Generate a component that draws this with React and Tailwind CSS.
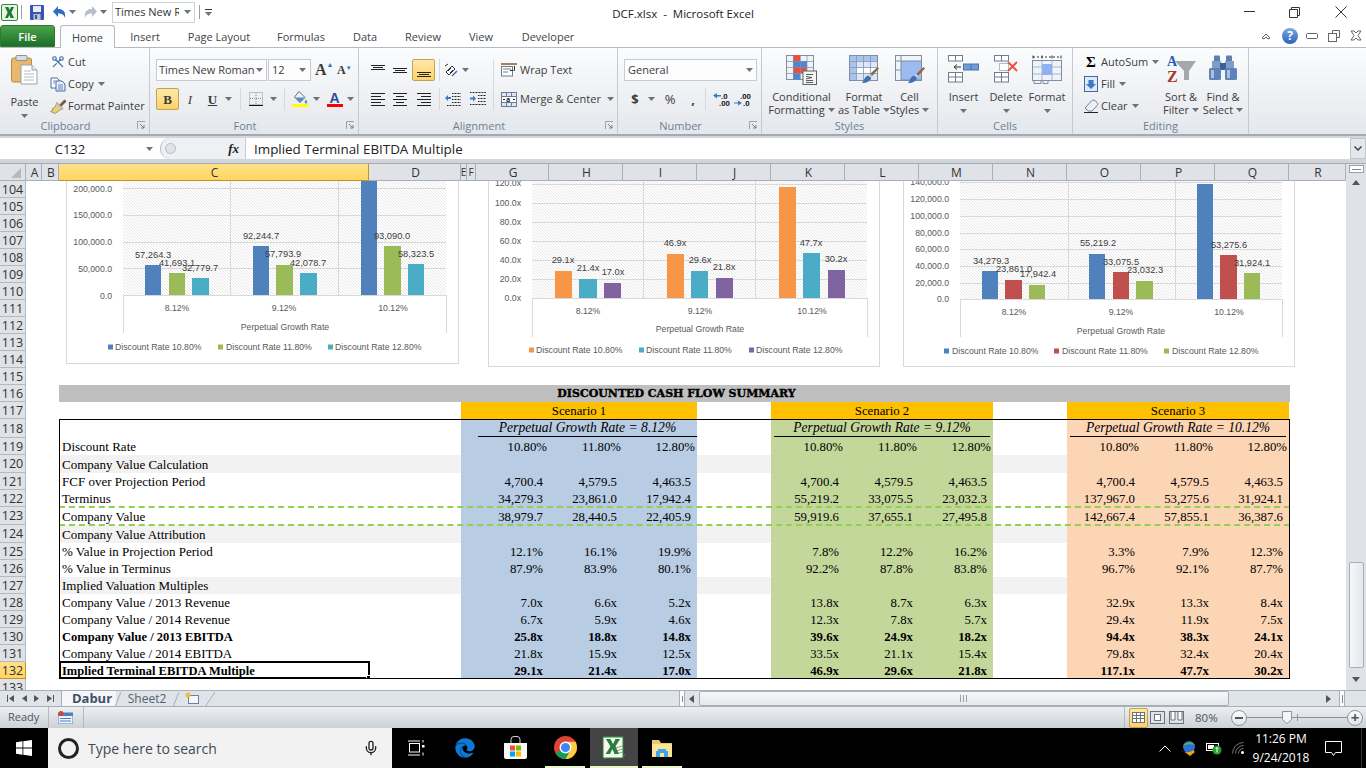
import React from "react";
import { Scissors, Mic } from "lucide-react";
import { FaEdge } from "react-icons/fa";

const Caret = ({ className = "" }) => (
  <svg width="7" height="4" viewBox="0 0 7 4" className={`shrink-0 ${className}`}><path d="M0 0h7L3.5 4z" fill="#6d7278" /></svg>
);

const Launcher = () => (
  <svg width="9" height="9" viewBox="0 0 9 9"><path d="M.5 8V.5H8" fill="none" stroke="#9aa3ad" /><path d="M3 3l4 4M7 4v3H4" fill="none" stroke="#77818c" /></svg>
);

const Lines = ({ ys }) => (
  <svg width="16" height="16" viewBox="0 0 16 16">
    {ys.map(([y, x1, x2], i) => <line key={i} x1={x1} x2={x2} y1={y + 0.5} y2={y + 0.5} stroke="#222" />)}
  </svg>
);

const ExcelLogo = ({ s = 17 }) => (
  <svg width={s} height={s} viewBox="0 0 17 17">
    <rect x=".5" y=".5" width="16" height="16" rx="1.5" fill="#e7f2e2" stroke="#2f8a3b" />
    <path d="M4 3h3.4L8.7 6 10 3h3L10.300 8.500 13 14H9.600L8.300 11 7 14H4l2.700-5.500z" fill="#1b7a3a" />
  </svg>
);

const Save = () => (
  <svg width="14" height="15" viewBox="0 0 14 15">
    <rect width="14" height="15" rx="1" fill="#3b52b4" />
    <rect x="3" y="1" width="8" height="6" fill="#e8ecf7" />
    <rect x="3.500" y="9" width="7" height="6" fill="#b9c2cf" />
    <rect x="5" y="10" width="2" height="4" fill="#3b52b4" />
  </svg>
);

const Undo = ({ flip, color }) => (
  <svg width="15" height="14" viewBox="0 0 15 14" style={flip ? { transform: "scaleX(-1)" } : undefined}>
    <path d="M1 6.500L6 1v3c5 0 8 2.500 7 9-1-3.500-3.500-4.500-7-4.500V12z" fill={color} />
  </svg>
);

const PasteIcon = () => (
  <svg width="27" height="30" viewBox="0 0 27 30">
    <rect x=".5" y="3" width="20" height="24" rx="2" fill="#e9b76d" stroke="#b98a45" />
    <rect x="5" y="0.500" width="11" height="5" rx="1" fill="#d9dde3" stroke="#8d8f93" />
    <path d="M10 10h11l5 5v14H10z" fill="#fff" stroke="#9aa3ad" />
    <path d="M21 10v5h5" fill="#e6eaf0" stroke="#9aa3ad" />
    <path d="M13 16h7M13 19h10M13 22h10M13 25h10" stroke="#b4bcc7" />
  </svg>
);

const CopyIcon = () => (
  <svg width="16" height="15" viewBox="0 0 16 15">
    <path d="M1 1h6l2 2v8H1z" fill="#fff" stroke="#486ba8" />
    <path d="M6 4h6l3 3v7H6z" fill="#e8eef8" stroke="#486ba8" />
    <path d="M8 8h5M8 10h5M8 12h5M3 4h3M3 6h2" stroke="#486ba8" strokeWidth=".8" />
  </svg>
);

const Painter = () => (
  <svg width="17" height="15" viewBox="0 0 17 15">
    <path d="M9.500 6L14.500 .8l1.700 1.700L11 7.500z" fill="#7c5a34" stroke="#5c4326" strokeWidth=".5" />
    <path d="M7 3.500l6 6-3 1.500-5 3.500L.5 12.500 3 11l-1-1 3-2z" fill="#ecd078" stroke="#8d7a3c" strokeWidth=".7" />
    <path d="M7.500 4l6 6 -1.500 1-6-6z" fill="#b6bcc4" />
  </svg>
);

const BorderIcon = () => (
  <svg width="14" height="14" viewBox="0 0 14 14">
    <rect x=".5" y=".5" width="13" height="12" fill="none" stroke="#8a8f96" strokeDasharray="1 1" />
    <path d="M7 1v12M1 6.500h12" stroke="#8a8f96" strokeDasharray="1 1" />
    <path d="M0 13.500h14" stroke="#111" />
  </svg>
);

const FillIcon = () => (
  <svg width="16" height="16" viewBox="0 0 16 16">
    <path d="M7 0.500L13 6.500 8 11.500 2.500 6z" fill="#eef2f7" stroke="#5a6d8a" />
    <path d="M3 6.500h9.500L8 11.500z" fill="#5b87c7" />
    <path d="M14 8.500c.8 1.300 1.300 2 1.300 2.700a1.300 1.300 0 01-2.600 0c0-.7.500-1.400 1.300-2.700z" fill="#5b87c7" />
    <rect y="13" width="16" height="3" fill="#ffff00" />
  </svg>
);

const OrientIcon = () => (
  <svg width="14" height="15" viewBox="0 0 14 15">
    <path d="M2 9l6-6 3 3-6 6z" fill="none" stroke="#333" />
    <path d="M4 8l3-3M6 10l3-3" stroke="#333" />
    <path d="M8 13l5-5" stroke="#486ba8" strokeWidth="1.500" />
    <path d="M1 3l3-2" stroke="#333" />
  </svg>
);

const IndentIcon = ({ out }) => (
  <svg width="16" height="14" viewBox="0 0 16 14">
    <path d={out ? "M7 1.500h9M7 4.500h9M7 7.500h9M7 10.500h9M2 13.500h14" : "M0 .5h16M8 3.500h8M8 6.500h8M8 9.500h8M0 12.500h16"} stroke="#222" strokeDasharray="1 .5" />
    <path d={out ? "M0 6l3-3v2h3v2H3v2z" : "M6 6.500L3 3.500v2H0v2h3v2z"} fill="#3d78c5" />
  </svg>
);

const WrapIcon = () => (
  <svg width="17" height="14" viewBox="0 0 17 14">
    <path d="M0 1h16" stroke="#8a5a2a" strokeWidth="1.500" />
    <rect x=".5" y="3.500" width="11" height="9.500" fill="#fff" stroke="#6c7c92" />
    <path d="M2 6h8M2 9h5" stroke="#6c7c92" />
    <path d="M13.500 3v4.500h-1" stroke="#333" fill="none" />
    <path d="M9 7.500h3" stroke="#333" />
  </svg>
);

const MergeIcon = () => (
  <svg width="16" height="15" viewBox="0 0 16 15">
    <rect x=".5" y=".5" width="15" height="14" fill="#dce6f4" stroke="#6c7c92" />
    <path d="M1 4.500h14M1 10.500h14M5.500 1v3M10.500 1v3M5.500 11v3M10.500 11v3" stroke="#6c7c92" />
    <rect x="1" y="5" width="14" height="5" fill="#fff" />
    <path d="M2 7.500h2M14 7.500h-2" stroke="#222" />
    <text x="5" y="10" fontSize="7" fontWeight="700" fill="#222">a</text>
  </svg>
);

const DecIcon = ({ inc }) => (
  <svg width="18" height="15" viewBox="0 0 18 15">
    {inc ? (
      <>
        <text x="6" y="6.500" fontSize="7.500" fontWeight="700" fill="#222">.00</text>
        <text x="9" y="14" fontSize="7.500" fontWeight="700" fill="#222">.0</text>
        <path d="M0 10.500h4V8.500l4 2.500-4 2.500v-2H0z" fill="#3d78c5" />
      </>
    ) : (
      <>
        <text x="8" y="6.500" fontSize="7.500" fontWeight="700" fill="#222">.0</text>
        <text x="6" y="14" fontSize="7.500" fontWeight="700" fill="#222">.00</text>
        <path d="M0 3.500L4 1v2h4v1.500H4v2z" fill="#3d78c5" />
      </>
    )}
  </svg>
);

const Brush = ({ x = 0, y = 0 }) => (
  <g transform={`translate(${x} ${y})`}>
    <path d="M14.500-2l1.500 1.500L9 7 7 5z" fill="#8c6a45" />
    <path d="M7 4.500L9.500 7 8 9 5 6.500z" fill="#c5c9ce" />
    <path d="M5 6.500L8 9c-1 3-4 5-9 5 2-1.500 1.500-5.500 6-7.500z" fill="#3f70b5" />
  </g>
);

const CondIcon = () => (
  <svg width="31" height="30" viewBox="0 0 31 30">
    <rect x=".5" y=".5" width="27" height="24" fill="#eef3fa" stroke="#7f8ea3" />
    <rect x="7" y="0" width="7" height="6" fill="#e8503a" />
    <rect x="7" y="6" width="7" height="6" fill="#4d86d8" />
    <rect x="14" y="6" width="7" height="6" fill="#4d86d8" />
    <rect x="7" y="12" width="7" height="6" fill="#e8503a" />
    <rect x="14" y="12" width="7" height="6" fill="#e8503a" />
    <rect x="7" y="18" width="7" height="6.500" fill="#4d86d8" />
    <path d="M7.500 1v23M14.500 1v23M21 1v23M1 6.500h26M1 12.500h26M1 18.500h26" stroke="#7f8ea3" strokeWidth=".7" />
    <rect x="17" y="16" width="13.500" height="13.500" fill="#f7f5ef" stroke="#5b6470" />
    <path d="M20 19.500h7M20 21.500l6 1-6 1.500M20 25.500h7M20 27.500h7" fill="none" stroke="#333" strokeWidth=".8" />
  </svg>
);

const TableIcon = () => (
  <svg width="31" height="30" viewBox="0 0 31 30">
    <rect x=".5" y=".5" width="28" height="25" fill="#fff" stroke="#7f8ea3" />
    <rect x="1" y="1" width="27" height="5.500" fill="#a9c3ea" />
    <rect x="1" y="6.500" width="6.500" height="18.500" fill="#a9c3ea" />
    <rect x="7.500" y="6.500" width="20.500" height="6" fill="#dbe6f6" />
    <rect x="7.500" y="18.500" width="20.500" height="6.500" fill="#dbe6f6" />
    <path d="M7.500 1v24M14.500 1v24M21.500 1v24M1 6.500h27M1 12.500h27M1 18.500h27" stroke="#8296b2" strokeWidth=".8" />
    <Brush x="14" y="14" />
  </svg>
);

const StylesIcon = () => (
  <svg width="30" height="30" viewBox="0 0 30 30">
    <rect x=".5" y=".5" width="26" height="25" fill="#eff4fb" stroke="#7f8ea3" />
    <rect x="6" y="6" width="20.500" height="19" fill="#9dbbf0" stroke="#7f8ea3" />
    <path d="M6 1v5M1 6h5M1 15h5" stroke="#7f8ea3" />
    <Brush x="14" y="14" />
  </svg>
);

const InsertIcon = () => (
  <svg width="31" height="28" viewBox="0 0 31 28">
    <g fill="#fff" stroke="#6f7d90"><rect x=".5" y=".5" width="14" height="5.500" /><path d="M7.500 1v5" /><rect x=".5" y="17.500" width="14" height="9.500" /><path d="M7.500 18v9M1 22h14" /></g>
    <rect x="15.500" y="9" width="15" height="6" fill="#6f9bd6" stroke="#4d74ad" /><path d="M23 9v6" stroke="#4d74ad" />
    <path d="M6 12h7M6 12l3-2.500M6 12l3 2.500" stroke="#333" fill="none" />
  </svg>
);

const DeleteIcon = () => (
  <svg width="25" height="28" viewBox="0 0 25 28">
    <g fill="#fff" stroke="#6f7d90"><rect x=".5" y=".5" width="14" height="5.500" /><path d="M7.500 1v5" /><rect x=".5" y="17.500" width="14" height="9.500" /><path d="M7.500 18v9M1 22h14" /></g>
    <rect x="5.500" y="8.500" width="9" height="7" fill="#fff" stroke="#6f7d90" strokeDasharray="1 1" />
    <path d="M14 7l9 9M23 7l-9 9" stroke="#e8503a" strokeWidth="1.800" />
  </svg>
);

const FormatCell = () => (
  <svg width="31" height="30" viewBox="0 0 31 30">
    <path d="M1 2h28" stroke="#333" strokeDasharray="2 2" />
    <path d="M1 .5v3M10 .5v3M20 .5v3M29 .5v3" stroke="#333" />
    <rect x=".5" y="5.500" width="29" height="20" fill="#eff3fa" stroke="#7f8ea3" />
    <path d="M10 6v19M20 6v19M1 12h28M1 19h28" stroke="#a9b6c8" />
    <rect x="10" y="9" width="10" height="11" fill="#8eb2ee" />
    <path d="M2 26v2.500h7v-2.500M11 26v2.500h5v-2.500" fill="none" stroke="#7f8ea3" />
  </svg>
);

const FillDown = () => (
  <svg width="14" height="16" viewBox="0 0 14 16">
    <rect x=".5" y=".5" width="13" height="15" fill="#dfe9f7" stroke="#3d6ab0" />
    <path d="M4.500 4h5v4H12L7 13 2 8h2.500z" fill="#3d78c5" />
  </svg>
);

const Eraser = () => (
  <svg width="15" height="14" viewBox="0 0 15 14">
    <path d="M1 9l7-7.500c1-1 2.500-.5 5 2 1 1 1 2 .3 2.800L8 12H4.500z" fill="#eef1f5" stroke="#6f7d90" />
    <path d="M0 13.500h14" stroke="#222" />
  </svg>
);

const SortIcon = () => (
  <svg width="30" height="28" viewBox="0 0 30 28">
    <path d="M9 6h21l-7 10v9h-5v-9z" fill="#a4a8ad" />
    <text x="1" y="11" fontSize="14" fontWeight="700" fill="#1f5fb3" fontFamily="Liberation Serif, serif">A</text>
    <text x="1" y="27" fontSize="16" fontWeight="700" fill="#a33a2b" fontFamily="Liberation Serif, serif">Z</text>
  </svg>
);

const Binoc = () => (
  <svg width="28" height="26" viewBox="0 0 28 26">
    <rect x="5" y="0.500" width="6" height="7" rx="1" fill="#5b7eb4" />
    <rect x="17" y="0.500" width="6" height="7" rx="1" fill="#5b7eb4" />
    <rect x="3" y="6" width="9" height="9" fill="#7f9cc9" />
    <rect x="16" y="6" width="9" height="9" fill="#7f9cc9" />
    <rect x="11" y="8" width="6" height="7" fill="#3e5f95" />
    <rect x="0" y="13" width="12" height="12" rx="1.500" fill="#5f82b8" />
    <rect x="16" y="13" width="12" height="12" rx="1.500" fill="#5f82b8" />
    <rect x="2" y="15" width="3" height="8" fill="#a9c0e2" />
    <rect x="18" y="15" width="3" height="8" fill="#a9c0e2" />
  </svg>
);

const TinyBtn = ({ w, children, active, className = "" }) => (
  <div className={`flex h-[22px] items-center justify-center gap-[2px] ${active ? "rounded-[2px] border border-[#c2a25a] bg-gradient-to-b from-[#fde9a8] to-[#fdd266]" : ""} ${className}`} style={{ width: w }}>{children}</div>
);

const Sep = ({ className = "" }) => <div className={`h-[22px] w-px shrink-0 bg-[#d6dae0] ${className}`} />;

const Group = ({ w, label, launcher, children, className = "" }) => (
  <div className={`flex shrink-0 flex-col border-r border-[#c5cad1] ${className}`} style={{ width: w }}>
    <div className="min-h-0 flex-1">{children}</div>
    <div className={`relative flex h-[17px] items-center justify-center text-[#6f7f91] ${launcher ? "pr-[18px]" : ""}`}>
      <span>{label}</span>
      {launcher && <span className="absolute right-[3px] top-[4px] flex"><Launcher /></span>}
    </div>
  </div>
);

const Stack = ({ w, icon, l1, l2, h = 35 }) => (
  <div className="flex shrink-0 flex-col items-center pt-[7px] leading-[13px]" style={{ width: w }}>
    <div className="flex items-start justify-center" style={{ height: h }}>{icon}</div>
    <div className="whitespace-nowrap">{l1}</div>
    <div className="flex h-[13px] items-center gap-[3px] whitespace-nowrap">{l2}{l2 ? <Caret /> : <Caret className="mt-[2px]" />}</div>
  </div>
);

const SmallRow = ({ icon, text, caret }) => (
  <div className="flex h-[22px] items-center whitespace-nowrap">
    <div className="flex w-[18px] shrink-0 items-center justify-center">{icon}</div>
    <span className="ml-[1px] flex items-center pb-[2px]">{text}{caret && <Caret className="ml-[4px] mt-[2px]" />}</span>
  </div>
);

function TitleBar() {
  return (
    <div className="grid h-[24px] grid-cols-[1fr_auto_1fr] items-center bg-white">
      <div className="flex items-center">
        <div className="ml-[1px] flex"><ExcelLogo /></div>
        <div className="ml-[3px] h-[14px] w-px bg-[#9aa0a8]" />
        <div className="ml-[8px] flex"><Save /></div>
        <div className="ml-[8px] flex"><Undo color="#2f70c4" /></div>
        <Caret className="ml-[2px]" />
        <div className="ml-[7px] flex"><Undo flip color="#b9c0c9" /></div>
        <Caret className="ml-[2px]" />
        <div className="ml-[5px] flex h-[21px] w-[83px] items-center border border-[#cfd3d8] pl-[2px] text-[11px] text-[#333]">
          <span className="w-[64px] overflow-hidden whitespace-nowrap">Times New Roman</span>
          <Caret className="ml-[5px]" />
        </div>
        <div className="ml-[4px] h-[14px] w-px bg-[#9aa0a8]" />
        <div className="ml-[5px] flex flex-col items-center gap-[2px]"><div className="h-px w-[7px] bg-[#333]" /><Caret /></div>
      </div>
      <div className="whitespace-pre pt-[3px] text-[11.500px] text-[#222]">DCF.xlsx  -  Microsoft Excel</div>
      <div className="flex items-center justify-end text-[#222]">
        <svg width="11" height="2" className="mr-[34px]"><rect width="11" height="1" fill="#333" /></svg>
        <svg width="11" height="11" viewBox="0 0 11 11" className="mr-[35px]"><path d="M2.500 2.500V.5h8v8h-2M.5 2.500h8v8h-8z" fill="none" stroke="#333" /></svg>
        <svg width="12" height="12" viewBox="0 0 12 12" className="mr-[19px]"><path d="M.5.5l11 11M11.500.5l-11 11" stroke="#333" /></svg>
      </div>
    </div>
  );
}

function TabsRow() {
  const tabs = [["Insert", 60], ["Page Layout", 88], ["Formulas", 76], ["Data", 52], ["Review", 64], ["View", 52], ["Developer", 82]];
  return (
    <div className="flex h-[24px] items-stretch border-b border-[#b4bac2] bg-white text-[11px]">
      <div className="mt-[1px] flex w-[55px] items-center justify-center rounded-t-[3px] border border-[#2c7a33] bg-gradient-to-b from-[#4ba44c] to-[#1c6f28] pt-[2px] font-semibold text-white">File</div>
      <div className="relative z-10 ml-[5px] mt-[1px] -mb-px flex w-[55px] items-center justify-center rounded-t-[3px] border border-b-0 border-[#b4bac2] bg-[#fbfcfd] pt-[2px] text-[#444]">Home</div>
      {tabs.map(([t, w]) => <div key={t} style={{ width: w }} className="flex items-center justify-center pt-[3px] text-[#444]">{t}</div>)}
      <div className="flex flex-1 items-center justify-end gap-[7px] pr-[4px]">
        <svg width="10" height="8" viewBox="0 0 10 8" className="mr-[4px]"><path d="M1 6l4-4 4 4-2 1-2-2-2 2z" fill="#fff" stroke="#666" /></svg>
        <div className="flex size-[16px] items-center justify-center rounded-full bg-gradient-to-b from-[#7aa7e2] to-[#2c63b8] text-[12px] font-bold leading-none text-white">?</div>
        <svg width="12" height="6" className="ml-[1px]"><rect x=".5" y=".5" width="11" height="5" rx="1" fill="#fff" stroke="#666" /></svg>
        <svg width="12" height="12" viewBox="0 0 12 12" className="ml-[3px]"><path d="M4.500 3V.5h7v7H9" fill="#fff" stroke="#666" /><rect x=".5" y="3.500" width="8" height="8" fill="#fff" stroke="#666" /></svg>
        <svg width="12" height="11" viewBox="0 0 12 11" className="ml-[3px]"><path d="M1 1h3l2 2 2-2h3L8 5.500 11 10H8L6 8l-2 2H1l3-4.500z" fill="#fff" stroke="#666" /></svg>
      </div>
    </div>
  );
}

function Ribbon() {
  return (
    <div className="flex h-[88px] items-stretch border-b-2 border-[#a4aab2] bg-gradient-to-b from-[#fbfcfd] to-[#e4e7ec] text-[11px] leading-[13px] text-[#3c3c3c]">
      <Group w={150} label="Clipboard" launcher>
        <div className="flex">
          <Stack w={49} h={40} icon={<PasteIcon />} l1="Paste" l2="" />
          <div className="pt-[3px]">
            <SmallRow icon={<Scissors size={14} color="#3f65a5" strokeWidth={2} className="rotate-90" />} text="Cut" />
            <SmallRow icon={<CopyIcon />} text="Copy" caret />
            <SmallRow icon={<Painter />} text="Format Painter" />
          </div>
        </div>
      </Group>

      <Group w={209} label="Font" launcher>
        <div className="flex flex-col gap-[7px] pl-[6px] pt-[11px]">
          <div className="flex h-[22px] items-center">
            <div className="flex h-[22px] w-[111px] items-center border border-[#c8ccd2] bg-[#fdfdfe] pb-[2px] pl-[2px] text-[11px]">
              <span className="flex-1 whitespace-nowrap">Times New Roman</span><Caret className="mr-[3px] mt-[2px]" />
            </div>
            <div className="ml-px flex h-[22px] w-[43px] items-center border border-[#c8ccd2] bg-[#fdfdfe] pb-[2px] pl-[3px] text-[11px]">
              <span className="flex-1">12</span><Caret className="mr-[4px] mt-[2px]" />
            </div>
            <div className="ml-[4px] flex w-[17px] font-['Liberation_Serif',serif] text-[16px] font-bold leading-none">A<span className="text-[7px] text-[#2f70c4]">▲</span></div>
            <div className="ml-[5px] flex w-[16px] items-end font-['Liberation_Serif',serif] text-[12px] font-bold leading-none">A<span className="mb-[5px] text-[6px] text-[#2f70c4]">▼</span></div>
          </div>
          <div className="flex h-[22px] items-center">
            <TinyBtn w={23} active className="font-['Liberation_Serif',serif] text-[13px] font-bold">B</TinyBtn>
            <TinyBtn w={22} className="font-['Liberation_Serif',serif] text-[13px] italic">I</TinyBtn>
            <TinyBtn w={38} className="font-['Liberation_Serif',serif] text-[13px] font-bold"><span className="mr-[6px] underline">U</span><Caret /></TinyBtn>
            <Sep className="ml-[1px]" />
            <TinyBtn w={43}><BorderIcon /><Caret className="ml-[5px]" /></TinyBtn>
            <Sep />
            <TinyBtn w={41}><FillIcon /><Caret className="ml-[3px]" /></TinyBtn>
            <TinyBtn w={30} className="-ml-[1px]">
              <span className="flex flex-col items-center font-['Liberation_Sans',sans-serif] text-[14px] font-bold leading-[12px] text-[#1f4f96]">A<span className="h-[3px] w-[16px] bg-[#ff0000]" /></span>
              <Caret className="ml-[2px]" />
            </TinyBtn>
          </div>
        </div>
      </Group>

      <Group w={259} label="Alignment" launcher>
        <div className="flex pt-[11px]">
          <div className="flex flex-col gap-[7px] pl-[8px]">
            <div className="flex h-[22px] items-center">
              <TinyBtn w={22}><Lines ys={[[3, 1, 15], [5, 3, 13], [7, 1, 15]]} /></TinyBtn>
              <TinyBtn w={22}><Lines ys={[[6, 1, 15], [8, 3, 13], [10, 1, 15]]} /></TinyBtn>
              <TinyBtn w={23} active className="ml-px"><Lines ys={[[10, 1, 15], [12, 3, 13], [14, 1, 15]]} /></TinyBtn>
              <Sep className="ml-[4px]" />
              <TinyBtn w={32}><OrientIcon /><Caret className="ml-[2px]" /></TinyBtn>
            </div>
            <div className="flex h-[22px] items-center">
              <TinyBtn w={22}><Lines ys={[[2, 1, 15], [5, 1, 11], [8, 1, 15], [11, 1, 11], [14, 1, 15]]} /></TinyBtn>
              <TinyBtn w={22}><Lines ys={[[2, 1, 15], [5, 4, 12], [8, 1, 15], [11, 4, 12], [14, 1, 15]]} /></TinyBtn>
              <TinyBtn w={23} className="ml-px"><Lines ys={[[2, 1, 15], [5, 5, 15], [8, 1, 15], [11, 5, 15], [14, 1, 15]]} /></TinyBtn>
              <Sep className="ml-[4px]" />
              <TinyBtn w={26}><IndentIcon out /></TinyBtn>
              <TinyBtn w={24}><IndentIcon /></TinyBtn>
            </div>
          </div>
          <Sep className="ml-[3px] h-[51px]" />
          <div className="flex flex-col gap-[7px] pl-[7px]">
            <div className="flex h-[22px] items-center gap-[2px]"><WrapIcon /><span className="pb-[2px]">Wrap Text</span></div>
            <div className="flex h-[22px] items-center gap-[3px]"><MergeIcon /><span className="pb-[2px]">Merge &amp; Center</span><Caret className="ml-[3px]" /></div>
          </div>
        </div>
      </Group>

      <Group w={144} label="Number" launcher>
        <div className="flex flex-col gap-[7px] pl-[6px] pt-[11px]">
          <div className="flex h-[22px] w-[133px] items-center border border-[#c8ccd2] bg-[#fdfdfe] pb-[2px] pl-[3px] text-[11px]"><span className="flex-1">General</span><Caret className="mr-[3px] mt-[2px]" /></div>
          <div className="flex h-[22px] items-center text-[13px]">
            <TinyBtn w={22} className="font-bold">$</TinyBtn>
            <Caret className="ml-[2px]" />
            <TinyBtn w={26} className="ml-[2px]">%</TinyBtn>
            <TinyBtn w={20} className="font-bold">,</TinyBtn>
            <Sep className="ml-[2px]" />
            <TinyBtn w={22} className="ml-[5px]"><DecIcon /></TinyBtn>
            <TinyBtn w={20}><DecIcon inc /></TinyBtn>
          </div>
        </div>
      </Group>

      <Group w={176} label="Styles">
        <div className="flex">
          <Stack w={79} icon={<CondIcon />} l1="Conditional" l2="Formatting" />
          <Stack w={46} icon={<TableIcon />} l1="Format" l2="as Table" />
          <Stack w={45} icon={<StylesIcon />} l1="Cell" l2="Styles" />
        </div>
      </Group>

      <Group w={135} label="Cells">
        <div className="flex">
          <Stack w={51} icon={<InsertIcon />} l1="Insert" l2="" />
          <Stack w={34} icon={<DeleteIcon />} l1="Delete" l2="" />
          <Stack w={48} icon={<FormatCell />} l1="Format" l2="" />
        </div>
      </Group>

      <Group w={176} label="Editing">
        <div className="flex">
          <div className="w-[90px] shrink-0 pl-[9px] pt-[3px]">
            <SmallRow icon={<span className="font-['Liberation_Serif',serif] text-[15px] font-bold text-black">Σ</span>} text="AutoSum" caret />
            <SmallRow icon={<FillDown />} text="Fill" caret />
            <SmallRow icon={<Eraser />} text="Clear" caret />
          </div>
          <Stack w={36} icon={<SortIcon />} l1="Sort &" l2="Filter" />
          <Stack w={48} icon={<Binoc />} l1="Find &" l2="Select" />
        </div>
      </Group>
    </div>
  );
}

function FormulaBar() {
  return (
    <div className="border-b border-[#a4aab2] bg-[#d2d6dc] pb-[4px] pt-[2px]">
      <div className="flex h-[21px] items-stretch bg-white text-[13.400px] text-[#222]">
        <div className="flex w-[160px] items-center">
          <span className="w-[140px] pt-[2px] text-center text-[13px]">C132</span>
          <Caret className="ml-[6px]" />
        </div>
        <div className="flex w-[85px] items-center rounded-l-[10px] border-l border-[#b7bcc3] bg-[#eef0f3] pl-[4px]">
          <div className="h-[11px] w-[11px] rounded-full border border-[#b9bdc3] bg-[#dfe2e6]" />
          <span className="ml-auto mr-[6px] font-['Liberation_Serif',serif] text-[13px] font-bold italic">fx</span>
        </div>
        <div className="flex flex-1 items-center border-l border-[#c8ccd2] pl-[8px] pt-[2px]">Implied Terminal EBITDA Multiple</div>
        <div className="flex w-[16px] items-center justify-center border border-[#c0c5cc] bg-[#e4e7eb]">
          <svg width="8" height="5" viewBox="0 0 8 5"><path d="M.5.5L4 4 7.500.5" fill="none" stroke="#444" strokeWidth="1.500" /></svg>
        </div>
      </div>
    </div>
  );
}

const columns = [["", 26], ["A", 16], ["B", 17], ["C", 310, true], ["D", 92], ["E", 6], ["F", 9], ["G", 73], ["H", 74], ["I", 74], ["J", 74], ["K", 74], ["L", 74], ["M", 74], ["N", 74], ["O", 74], ["P", 74], ["Q", 74], ["R", 57]];

function ColumnHeader() {
  return (
    <div className="flex h-[17px] bg-[#dfe2e7] text-[12px] leading-none text-[#333]">
      {columns.map(([c, w, sel], i) => (
        <div key={i} style={{ width: w }} className={`flex shrink-0 items-center justify-center overflow-hidden border-b border-r ${i > 4 && i < 7 ? "text-[10px]" : "pl-[2px] pt-[2px]"} ${sel ? "border-[#c2922e] bg-gradient-to-b from-[#fee08a] to-[#ffd65e]" : "border-[#aab0b8]"}`}>
          {i === 0 ? <svg width="10" height="10" className="ml-[4px]"><path d="M10 0v10H0z" fill="#b4b9c0" /></svg> : c}
        </div>
      ))}
    </div>
  );
}

const rowHeights = [];
for (let i = 104; i <= 117; i++) rowHeights.push([i, 17]);
[[118, 19], [119, 17], [120, 18], [121, 17], [122, 17], [123, 18], [124, 18]].forEach((r) => rowHeights.push(r));
for (let i = 125; i <= 133; i++) rowHeights.push([i, 17]);

function RowHeader() {
  return (
    <div className="w-[26px] shrink-0 overflow-hidden bg-[#dfe2e7] text-[12.500px] leading-none text-[#333]">
      {rowHeights.map(([n, h]) => (
        <div key={n} style={{ height: h }} className={`flex items-center justify-center border-b border-r pt-[2px] ${n === 132 ? "border-[#c2922e] bg-gradient-to-b from-[#fee08a] to-[#ffd65e]" : "border-[#b4bac2]"}`}>{n}</div>
      ))}
    </div>
  );
}

function Chart({ id, x0, x1, y1, plot, grid, verticals, axisBottom, ticks, tickRight, bars, labels, cats, catY, titleX, titleY, legend, legendY, className }) {
  const w = x1 - x0, h = y1 - 181;
  const [px0, px1] = plot;
  const base = grid[grid.length - 1];
  return (
    <div className={`shrink-0 border-x border-b border-[#d9d9d9] bg-white ${className}`} style={{ width: w, height: h }}>
      <svg width={w - 2} height={h - 1} viewBox={`${x0 + 1} 181 ${w - 2} ${h - 1}`} className="block font-['Liberation_Sans',sans-serif]">
        <defs>
          <pattern id={id} width="3" height="3" patternUnits="userSpaceOnUse">
            <path d="M0 0l3 3M-1 2l2 2M2-1l2 2" stroke="#d6d6d6" strokeWidth=".6" />
          </pattern>
        </defs>
        <rect x={px0} y="181" width={px1 - px0} height={base - 181} fill={`url(#${id})`} />
        {grid.map((y) => <line key={y} x1={px0} x2={px1} y1={y + 0.5} y2={y + 0.5} stroke="#d9d9d9" />)}
        {verticals.map((x) => <line key={x} x1={x + 0.5} x2={x + 0.5} y1="181" y2={base} stroke="#d9d9d9" />)}
        {plot.map((x) => <line key={x} x1={x + 0.5} x2={x + 0.5} y1={base} y2={axisBottom} stroke="#d9d9d9" />)}
        {bars.map(([a, b, t, c], i) => <rect key={i} x={a} y={t} width={b - a} height={base - t} fill={c} />)}
        <g fontSize="8.700" fill="#595959">
          {ticks.map(([t, y]) => <text key={t} x={tickRight} y={y + 3} textAnchor="end">{t}</text>)}
          {cats.map(([t, x]) => <text key={t} x={x} y={catY + 3} textAnchor="middle">{t}</text>)}
          <text x={titleX} y={titleY + 3} textAnchor="middle">Perpetual Growth Rate</text>
          {legend.map(([xs, xt, c, t]) => (
            <g key={t}>
              <rect x={xs} y={legendY - 2.500} width="5" height="5" fill={c} />
              <text x={xt} y={legendY + 3}>{t}</text>
            </g>
          ))}
        </g>
        <g fontSize="9.300" fill="#404040">
          {labels.map(([t, x, y]) => <text key={t + x} x={x} y={y + 3} textAnchor="middle">{t}</text>)}
        </g>
      </svg>
    </div>
  );
}

const BLUE = "#4f81bd", GRN = "#9bbb59", TEAL = "#4bacc6", ORG = "#f79646", PUR = "#8064a2", RED = "#c0504d";

function Charts() {
  return (
    <div className="flex h-[204px] items-start overflow-hidden pl-[40px]">
      <Chart id="h1" x0={66} x1={459} y1={364} plot={[123, 446]} grid={[188, 215, 242, 268, 295]} verticals={[230, 338]} axisBottom={333}
        ticks={[["200,000.0", 189], ["150,000.0", 215], ["100,000.0", 242], ["50,000.0", 269], ["0.0", 296]]} tickRight={112}
        bars={[[145, 161, 265, BLUE], [169, 185, 273, GRN], [192, 209, 278, TEAL], [253, 269, 246, BLUE], [276, 293, 265, GRN], [300, 317, 273, TEAL], [361, 377, 181, BLUE], [384, 401, 246, GRN], [408, 424, 264, TEAL]]}
        labels={[["57,264.3", 153, 255], ["41,693.1", 177, 263], ["32,779.7", 200, 268], ["92,244.7", 261, 236], ["57,793.9", 283, 254], ["42,078.7", 308, 263], ["93,090.0", 392, 236], ["58,323.5", 416, 254]]}
        cats={[["8.12%", 177], ["9.12%", 284], ["10.12%", 393]]} catY={308} titleX={285} titleY={327}
        legend={[[108, 115, BLUE, "Discount Rate 10.80%"], [218, 226, GRN, "Discount Rate 11.80%"], [328, 335, TEAL, "Discount Rate 12.80%"]]} legendY={347} />
      <Chart id="h2" className="ml-[29px]" x0={488} x1={880} y1={367} plot={[532, 867]} grid={[184, 203, 222, 241, 260, 279, 298]} verticals={[643, 755]} axisBottom={337}
        ticks={[["120.0x", 183], ["100.0x", 203], ["80.0x", 222], ["60.0x", 241], ["40.0x", 260], ["20.0x", 279], ["0.0x", 298]]} tickRight={521}
        bars={[[555, 572, 271, ORG], [579, 597, 279, TEAL], [604, 621, 283, PUR], [667, 684, 254, ORG], [691, 708, 271, TEAL], [716, 733, 278, PUR], [779, 796, 187, ORG], [803, 820, 253, TEAL], [828, 845, 270, PUR]]}
        labels={[["29.1x", 563, 260], ["21.4x", 588, 268], ["17.0x", 613, 272], ["46.9x", 675, 243], ["29.6x", 700, 260], ["21.8x", 724, 267], ["47.7x", 811, 243], ["30.2x", 836, 259]]}
        cats={[["8.12%", 588], ["9.12%", 700], ["10.12%", 812]]} catY={311} titleX={700} titleY={329}
        legend={[[529, 536, ORG, "Discount Rate 10.80%"], [639, 646, TEAL, "Discount Rate 11.80%"], [749, 756, PUR, "Discount Rate 12.80%"]]} legendY={350} />
      <Chart id="h3" className="ml-[23px]" x0={903} x1={1295} y1={367} plot={[960, 1282]} grid={[182, 199, 216, 233, 249, 266, 283, 299]} verticals={[1068, 1175]} axisBottom={337}
        ticks={[["140,000.0", 182], ["120,000.0", 199], ["100,000.0", 216], ["80,000.0", 233], ["60,000.0", 249], ["40,000.0", 266], ["20,000.0", 283], ["0.0", 299]]} tickRight={949}
        bars={[[982, 998, 271, BLUE], [1005, 1022, 280, RED], [1029, 1045, 285, GRN], [1089, 1105, 254, BLUE], [1113, 1129, 272, RED], [1136, 1153, 281, GRN], [1197, 1213, 184, BLUE], [1220, 1237, 255, RED], [1244, 1260, 273, GRN]]}
        labels={[["34,279.3", 991, 261], ["23,861.0", 1014, 269], ["17,942.4", 1038, 274], ["55,219.2", 1098, 243], ["33,075.5", 1121, 262], ["23,032.3", 1145, 270], ["53,275.6", 1229, 245], ["31,924.1", 1252, 263]]}
        cats={[["8.12%", 1014], ["9.12%", 1121], ["10.12%", 1229]]} catY={312} titleX={1121} titleY={331}
        legend={[[944, 952, BLUE, "Discount Rate 10.80%"], [1054, 1062, RED, "Discount Rate 11.80%"], [1164, 1172, GRN, "Discount Rate 12.80%"]]} legendY={351} />
    </div>
  );
}

const pct = ["10.80%", "11.80%", "12.80%"];
const fcf = ["4,700.4", "4,579.5", "4,463.5"];
const tableRows = [
  { n: 119, h: 17, label: "Discount Rate", v: [...pct, ...pct, ...pct], tight: true },
  { n: 120, h: 18, label: "Company Value Calculation", grey: true },
  { n: 121, h: 17, label: "FCF over Projection Period", v: [...fcf, ...fcf, ...fcf] },
  { n: 122, h: 17, label: "Terminus", v: ["34,279.3", "23,861.0", "17,942.4", "55,219.2", "33,075.5", "23,032.3", "137,967.0", "53,275.6", "31,924.1"] },
  { n: 123, h: 18, label: "Company Value", dashed: true, v: ["38,979.7", "28,440.5", "22,405.9", "59,919.6", "37,655.1", "27,495.8", "142,667.4", "57,855.1", "36,387.6"] },
  { n: 124, h: 18, label: "Company Value Attribution", grey: true },
  { n: 125, h: 17, label: "% Value in Projection Period", v: ["12.1%", "16.1%", "19.9%", "7.8%", "12.2%", "16.2%", "3.3%", "7.9%", "12.3%"] },
  { n: 126, h: 17, label: "% Value in Terminus", v: ["87.9%", "83.9%", "80.1%", "92.2%", "87.8%", "83.8%", "96.7%", "92.1%", "87.7%"] },
  { n: 127, h: 17, label: "Implied Valuation Multiples", grey: true },
  { n: 128, h: 17, label: "Company Value / 2013 Revenue", v: ["7.0x", "6.6x", "5.2x", "13.8x", "8.7x", "6.3x", "32.9x", "13.3x", "8.4x"] },
  { n: 129, h: 17, label: "Company Value / 2014 Revenue", v: ["6.7x", "5.9x", "4.6x", "12.3x", "7.8x", "5.7x", "29.4x", "11.9x", "7.5x"] },
  { n: 130, h: 17, label: "Company Value / 2013 EBITDA", bold: true, v: ["25.8x", "18.8x", "14.8x", "39.6x", "24.9x", "18.2x", "94.4x", "38.3x", "24.1x"] },
  { n: 131, h: 17, label: "Company Value / 2014 EBITDA", v: ["21.8x", "15.9x", "12.5x", "33.5x", "21.1x", "15.4x", "79.8x", "32.4x", "20.4x"] },
  { n: 132, h: 17, label: "Implied Terminal EBITDA Multiple", bold: true, selected: true, v: ["29.1x", "21.4x", "17.0x", "46.9x", "29.6x", "21.8x", "117.1x", "47.7x", "30.2x"] },
];

const COLS = "grid grid-cols-[402px_88px_74px_74px_74px_74px_74px_74px_74px_74px_74px_74px]";
const tint = ["bg-[#b8cce4]", "bg-[#c4d79b]", "bg-[#fcd5b4]"];

function ValueRow({ r }) {
  const gap = r.grey ? "bg-[#f2f2f2]" : "";
  const cell = (s, i) => (
    <div key={i} className={`flex items-center justify-end whitespace-nowrap pt-[2px] ${tint[s]} ${r.tight ? "pr-[2px]" : "pr-[6px]"}`}>{r.v ? r.v[s * 3 + i] : ""}</div>
  );
  return (
    <div
      style={{ height: r.h }}
      className={`${COLS} ${r.bold ? "font-bold" : ""} ${r.dashed ? "relative z-10 after:absolute after:inset-x-0 after:-top-px after:-bottom-px after:border-y-2 after:border-dashed after:border-[#92d050]" : ""}`}
    >
      <div className={`relative flex items-center whitespace-nowrap pl-[3px] ${r.bold ? "pt-[2px] text-[12.500px]" : "text-[13px]"} ${gap}`}>
        {r.label}
        {r.selected && (
          <div className="absolute -top-px bottom-0 left-0 w-[311px] border-2 border-black">
            <div className="absolute -bottom-[3px] -right-[3px] size-[5px] border border-white bg-black" />
          </div>
        )}
      </div>
      {[0, 1, 2].map((i) => cell(0, i))}
      <div className={gap} />
      {[0, 1, 2].map((i) => cell(1, i))}
      <div className={gap} />
      {[0, 1, 2].map((i) => cell(2, i))}
    </div>
  );
}

function SummaryTable() {
  const growth = [["8.12%", "ml-[17px]"], ["9.12%", "mx-[3px]"], ["10.12%", "mx-[3px]"]];
  return (
    <div className="w-[1231px] font-['Liberation_Serif',serif] text-[12.800px] leading-none text-black">
      <div className="flex h-[17px] items-center justify-center bg-[#bfbfbf] pl-[4px] font-['DejaVu_Serif',serif] text-[11px] font-bold [-webkit-text-stroke:0.4px_black]">DISCOUNTED CASH FLOW SUMMARY</div>
      <div className={`${COLS} h-[17px]`}>
        <div />
        <div className="col-span-3 flex items-center justify-center bg-[#ffc000] pt-[2px]">Scenario 1</div>
        <div />
        <div className="col-span-3 flex items-center justify-center bg-[#ffc000] pt-[2px]">Scenario 2</div>
        <div />
        <div className="col-span-3 flex items-center justify-center bg-[#ffc000] pt-[2px]">Scenario 3</div>
      </div>
      <div className="relative w-[1231px] after:pointer-events-none after:absolute after:inset-0 after:z-20 after:border after:border-black">
        <div className={`${COLS} h-[19px]`}>
          <div />
          {growth.map(([g, m], i) => (
            <React.Fragment key={g}>
              <div className={`col-span-3 ${tint[i]}`}>
                <div className={`flex h-[18px] items-center justify-center border-b border-black pt-[1px] text-[13.600px] italic ${m}`}>Perpetual Growth Rate = {g}</div>
              </div>
              {i < 2 && <div />}
            </React.Fragment>
          ))}
        </div>
        {tableRows.map((r) => <ValueRow key={r.n} r={r} />)}
      </div>
    </div>
  );
}

const Arrow = ({ d, s = 8 }) => (
  <svg width={s} height={s} viewBox="0 0 8 8"><path d={d} fill="#555" /></svg>
);

function VScroll() {
  return (
    <div className="flex h-[526px] w-[20px] shrink-0 flex-col items-center bg-[#dfe2e9]">
      <div className="mt-[1px] flex h-[8px] w-[15px] items-center justify-center border border-[#9aa0a8] bg-white"><div className="h-px w-[9px] bg-[#888]" /></div>
      <div className="flex h-[17px] items-center justify-center"><Arrow d="M4 2l4 5H0z" /></div>
      <div className="h-[372px] shrink-0" />
      <div className="h-[106px] w-[15px] shrink-0 rounded-[2px] border border-[#a9afb8] bg-gradient-to-r from-[#f6f7f9] to-[#e4e7eb]" />
      <div className="flex h-[22px] items-center justify-center"><Arrow d="M0 2h8L4 7z" /></div>
    </div>
  );
}

function SheetTabs() {
  return (
    <div className="flex h-[16px] items-stretch border-t border-[#a9afb7] bg-[#dfe3ea] text-[#55606c]">
      <div className="flex w-[62px] shrink-0 items-center justify-evenly border-r border-[#a9afb7]">
        <svg width="7" height="7" viewBox="0 0 7 7"><path d="M0 0h1v7H0zM7 0v7L2 3.500z" fill="#555" /></svg>
        <svg width="5" height="7" viewBox="0 0 5 7"><path d="M5 0v7L0 3.500z" fill="#555" /></svg>
        <svg width="5" height="7" viewBox="0 0 5 7"><path d="M0 0v7l5-3.500z" fill="#555" /></svg>
        <svg width="7" height="7" viewBox="0 0 7 7"><path d="M6 0h1v7H6zM0 0v7l5-3.500z" fill="#555" /></svg>
      </div>
      <div className="flex w-[54px] shrink-0 items-center justify-center bg-[#f4f6f9] pl-[6px] text-[13px] font-bold leading-none text-[#3f5068]">Dabur</div>
      <svg width="6" height="16" className="-ml-[1px] shrink-0"><path d="M0 16l6-15" stroke="#a9afb7" /></svg>
      <div className="flex w-[52px] shrink-0 items-center justify-center text-[12px] leading-none">Sheet2</div>
      <svg width="6" height="16" className="shrink-0"><path d="M0 16l6-15" stroke="#a9afb7" /></svg>
      <div className="flex w-[26px] shrink-0 items-center justify-center">
        <svg width="14" height="13" viewBox="0 0 14 13"><rect x="3.500" y="3.500" width="10" height="8" fill="#f4f6f9" stroke="#71809a" /><circle cx="3" cy="3" r="2.500" fill="#f4b942" /></svg>
      </div>
      <svg width="10" height="16" className="shrink-0"><path d="M0 16L10 1" stroke="#a9afb7" /></svg>
      <div className="flex-1" />
      <div className="flex w-[6px] shrink-0 items-center justify-center border-x border-[#a9afb7] bg-white"><div className="h-[6px] w-px bg-[#888]" /></div>
      <div className="flex w-[14px] shrink-0 items-center justify-center"><Arrow d="M6 0v8L1 4z" /></div>
      <div className="flex w-[530px] shrink-0 items-center justify-center rounded-[2px] border border-[#a9afb8] bg-gradient-to-b from-[#f6f7f9] to-[#e4e7eb]">
        <svg width="8" height="7"><path d="M.5 0v7M3.500 0v7M6.500 0v7" stroke="#9aa0a8" /></svg>
      </div>
      <div className="flex w-[110px] shrink-0 items-center justify-end pr-[7px]"><Arrow d="M2 0v8l5-4z" /></div>
      <div className="mr-[21px] flex w-[6px] shrink-0 items-center justify-center border-x border-[#a9afb7] bg-white"><div className="h-[8px] w-px bg-[#888]" /></div>
    </div>
  );
}

function StatusBar() {
  return (
    <div className="flex h-[22px] items-center border-t border-[#a9afb7] bg-gradient-to-b from-[#edeff2] to-[#cdd1d7] text-[11px] text-[#4c5561]">
      <div className="w-[48px] pl-[8px]">Ready</div>
      <div className="h-[21px] w-px bg-[#b4b9c0]" />
      <div className="ml-[9px] flex">
        <svg width="15" height="13" viewBox="0 0 15 13"><rect y="2" width="15" height="11" fill="#eef3fa" stroke="#4f7fc0" /><rect y="2" width="15" height="3" fill="#4f7fc0" /><path d="M2 7.500h11M2 10h11" stroke="#4f7fc0" /><circle cx="3" cy="2.500" r="2.500" fill="#d9442f" /></svg>
      </div>
      <div className="ml-[10px] h-[21px] w-px bg-[#b4b9c0]" />
      <div className="flex-1" />
      <div className="h-[21px] w-px bg-[#b4b9c0]" />
      <div className="ml-[4px] flex h-[20px] w-[19px] items-center justify-center rounded-[2px] border border-[#c2a25a] bg-gradient-to-b from-[#fde9a8] to-[#fdd266]">
        <svg width="13" height="11" viewBox="0 0 13 11"><rect x=".5" y=".5" width="12" height="10" fill="#fff" stroke="#6d7278" /><path d="M4.500 1v9M8.500 1v9M1 3.500h11M1 6.500h11" stroke="#6d7278" /></svg>
      </div>
      <svg width="15" height="13" viewBox="0 0 15 13" className="ml-[2px]"><rect x=".5" y=".5" width="14" height="12" fill="#dfe2e6" stroke="#6d7278" /><rect x="4.500" y="3.500" width="6" height="6" fill="#fff" stroke="#6d7278" /></svg>
      <svg width="15" height="13" viewBox="0 0 15 13" className="ml-[4px]"><rect x=".5" y=".5" width="14" height="12" fill="#dfe2e6" stroke="#6d7278" /><path d="M2 1v8h4V1M9 1v8h4V1" fill="#fff" stroke="#6d7278" /></svg>
      <span className="ml-[11px] w-[36px] text-[11.500px]">80%</span>
      <div className="flex size-[16px] items-center justify-center rounded-full border border-[#8d939b] bg-gradient-to-b from-white to-[#dfe2e6]"><div className="h-[2px] w-[8px] bg-[#555]" /></div>
      <div className="relative h-px w-[100px] bg-[#8d939b]">
        <div className="absolute -top-[3px] left-[50px] h-[7px] w-px bg-[#8d939b]" />
        <svg width="10" height="13" viewBox="0 0 10 13" className="absolute -top-[6px] left-[35px]"><path d="M.5.5h9v8L5 12.500.5 8.500z" fill="#f5f6f8" stroke="#8d939b" /></svg>
      </div>
      <div className="mr-[3px] flex size-[16px] items-center justify-center rounded-full border border-[#8d939b] bg-gradient-to-b from-white to-[#dfe2e6] text-[15px] font-bold leading-none text-[#555]">+</div>
    </div>
  );
}

function TaskCell({ w, active, open, children }) {
  return (
    <div style={{ width: w }} className={`flex h-[40px] shrink-0 flex-col items-center ${active ? "bg-[#444444]" : ""}`}>
      <div className="flex flex-1 items-center justify-center pt-[1px]">{children}</div>
      <div className={`h-[2px] ${active ? "w-full bg-[#e8f5c8]" : open ? "w-[40px] bg-[#e8f5c8]" : ""}`} />
    </div>
  );
}

function Taskbar() {
  return (
    <div className="flex h-[40px] items-center bg-black text-white">
      <TaskCell w={48}>
        <svg width="16" height="16" viewBox="0 0 16 16"><path d="M0 2.200L6.500 1.300V7.500H0zM7.300 1.200L16 0V7.500H7.300zM0 8.400H6.500V14.700L0 13.800zM7.300 8.400H16V16L7.300 14.800z" fill="#fff" /></svg>
      </TaskCell>
      <div className="flex h-[40px] w-[344px] shrink-0 items-center bg-[#f2f2f2] text-[#333]">
        <div className="ml-[10px] size-[21px] rounded-full border-[3px] border-[#222]" />
        <span className="ml-[9px] flex-1 text-[14px] text-[#3e4a55]">Type here to search</span>
        <Mic size={16} color="#222" className="mr-[13px]" />
      </div>
      <TaskCell w={48}>
        <svg width="17" height="16" viewBox="0 0 17 16" fill="none" stroke="#fff"><rect x="1.500" y="3.500" width="10" height="8.500" /><path d="M0 1h12M0 15h12M15 0v2.500M15 12.500v3" /><rect x="14" y="5" width="2.500" height="2.500" fill="#fff" stroke="none" /></svg>
      </TaskCell>
      <TaskCell w={50}><FaEdge size={20} color="#0d78d8" /></TaskCell>
      <TaskCell w={50}>
        <svg width="23" height="23" viewBox="0 0 23 23"><path d="M0 7h23v14a2 2 0 01-2 2H2a2 2 0 01-2-2z" fill="#f8f8f8" /><path d="M7 7V3.500a3 3 0 013-3h3a3 3 0 013 3V7" fill="none" stroke="#d8d8d8" strokeWidth="1" /><rect x="6" y="9.500" width="5" height="5" fill="#f25022" /><rect x="12" y="9.500" width="5" height="5" fill="#7fba00" /><rect x="6" y="15.500" width="5" height="5" fill="#00a4ef" /><rect x="12" y="15.500" width="5" height="5" fill="#ffb900" /></svg>
      </TaskCell>
      <TaskCell w={50} open>
        <svg width="23" height="23" viewBox="0 0 24 24">
          <circle cx="12" cy="12" r="12" fill="#db4437" />
          <path d="M12 12L1.600 18A12 12 0 0012 24l6-10z" fill="#0f9d58" />
          <path d="M12 6h10.500A12 12 0 0124 12a12 12 0 01-12 12l6-10.500z" fill="#ffcd40" />
          <circle cx="12" cy="12" r="5.500" fill="#4285f4" stroke="#fff" strokeWidth="1.500" />
        </svg>
      </TaskCell>
      <TaskCell w={48} active>
        <svg width="24" height="23" viewBox="0 0 24 23"><path d="M2 .5h19v20l2-2-21 4z" fill="#f1f6ec" stroke="#2d7a3c" /><path d="M1 1h20v21H1z" fill="#f5f8f1" stroke="#2d7a3c" /><path d="M13 12l8-2M13 15l8-2M13 18l8-2" stroke="#7cae77" /><path d="M4 3h4.500L11 8l2.500-5H18l-4.500 7.500L17 18h-4.500L10.500 13 8 18H3.500l5-7.500z" fill="#2a7d3a" /></svg>
      </TaskCell>
      <TaskCell w={48} open>
        <svg width="22" height="20" viewBox="0 0 22 20"><path d="M1 2h7l2 3h11v14H1z" fill="#efc66a" /><path d="M1 6h20v13H1z" fill="#fae39b" /><path d="M7 13v-2h8v2l2 0v6H5v-6z" fill="#3da6e3" /><rect x="9" y="15" width="4" height="4" fill="#fae39b" /></svg>
      </TaskCell>
      <div className="flex-1" />
      <svg width="12" height="7" viewBox="0 0 12 7" className="mr-[10px]"><path d="M.5 6.500L6 1l5.500 5.500" fill="none" stroke="#fff" /></svg>
      <svg width="16" height="15" viewBox="0 0 16 15" className="mr-[9px]"><circle cx="8" cy="6" r="6" fill="#2d6fd2" /><path d="M2 5c2-4 9-5 12-1-3-1-8-1-12 1z" fill="#5bbd3a" /><path d="M0 9c3 3 9 3 12 0l2 2-5 4-4-3z" fill="#e8a41c" /></svg>
      <svg width="16" height="14" viewBox="0 0 16 14" className="mr-[10px]"><rect x=".5" y="2.500" width="12" height="7" fill="none" stroke="#fff" /><rect x="2" y="4" width="6" height="4" fill="#fff" /><circle cx="11" cy="9" r="4.500" fill="#2ca02c" /><path d="M11 6.500v5M9.500 8l1.500-1.500L12.500 8" fill="none" stroke="#fff" /></svg>
      <svg width="13" height="12" viewBox="0 0 13 12" className="mr-[4px]"><path d="M.5 11.500a11 11 0 0111-11M3.500 11.500a8 8 0 018-8M6.500 11.500a5 5 0 015-5" fill="none" stroke="#777" /><circle cx="10.500" cy="10.500" r="1.500" fill="#fff" /></svg>
      <div className="flex w-[64px] flex-col items-center text-[12px] leading-[19px]">
        <span>11:26 PM</span>
        <span>9/24/2018</span>
      </div>
      <svg width="17" height="15" viewBox="0 0 17 15" className="ml-[12px]"><path d="M.5.5h16v11h-6l-2 3-2-3h-6z" fill="none" stroke="#fff" /></svg>
      <div className="ml-[19px] mr-[4px] h-[40px] w-px bg-[#333]" />
    </div>
  );
}

export default function App() {
  return (
    <div className="h-[768px] w-[1366px] overflow-hidden bg-white font-['Open_Sans',sans-serif]">
      <TitleBar />
      <TabsRow />
      <Ribbon />
      <FormulaBar />
      <div className="flex h-[526px]">
        <div className="flex w-[1346px] flex-col overflow-hidden">
          <ColumnHeader />
          <div className="flex h-[509px] overflow-hidden">
            <RowHeader />
            <div className="min-w-0 flex-1">
              <Charts />
              <div className="pl-[33px]"><SummaryTable /></div>
            </div>
          </div>
        </div>
        <VScroll />
      </div>
      <SheetTabs />
      <StatusBar />
      <Taskbar />
    </div>
  );
}
